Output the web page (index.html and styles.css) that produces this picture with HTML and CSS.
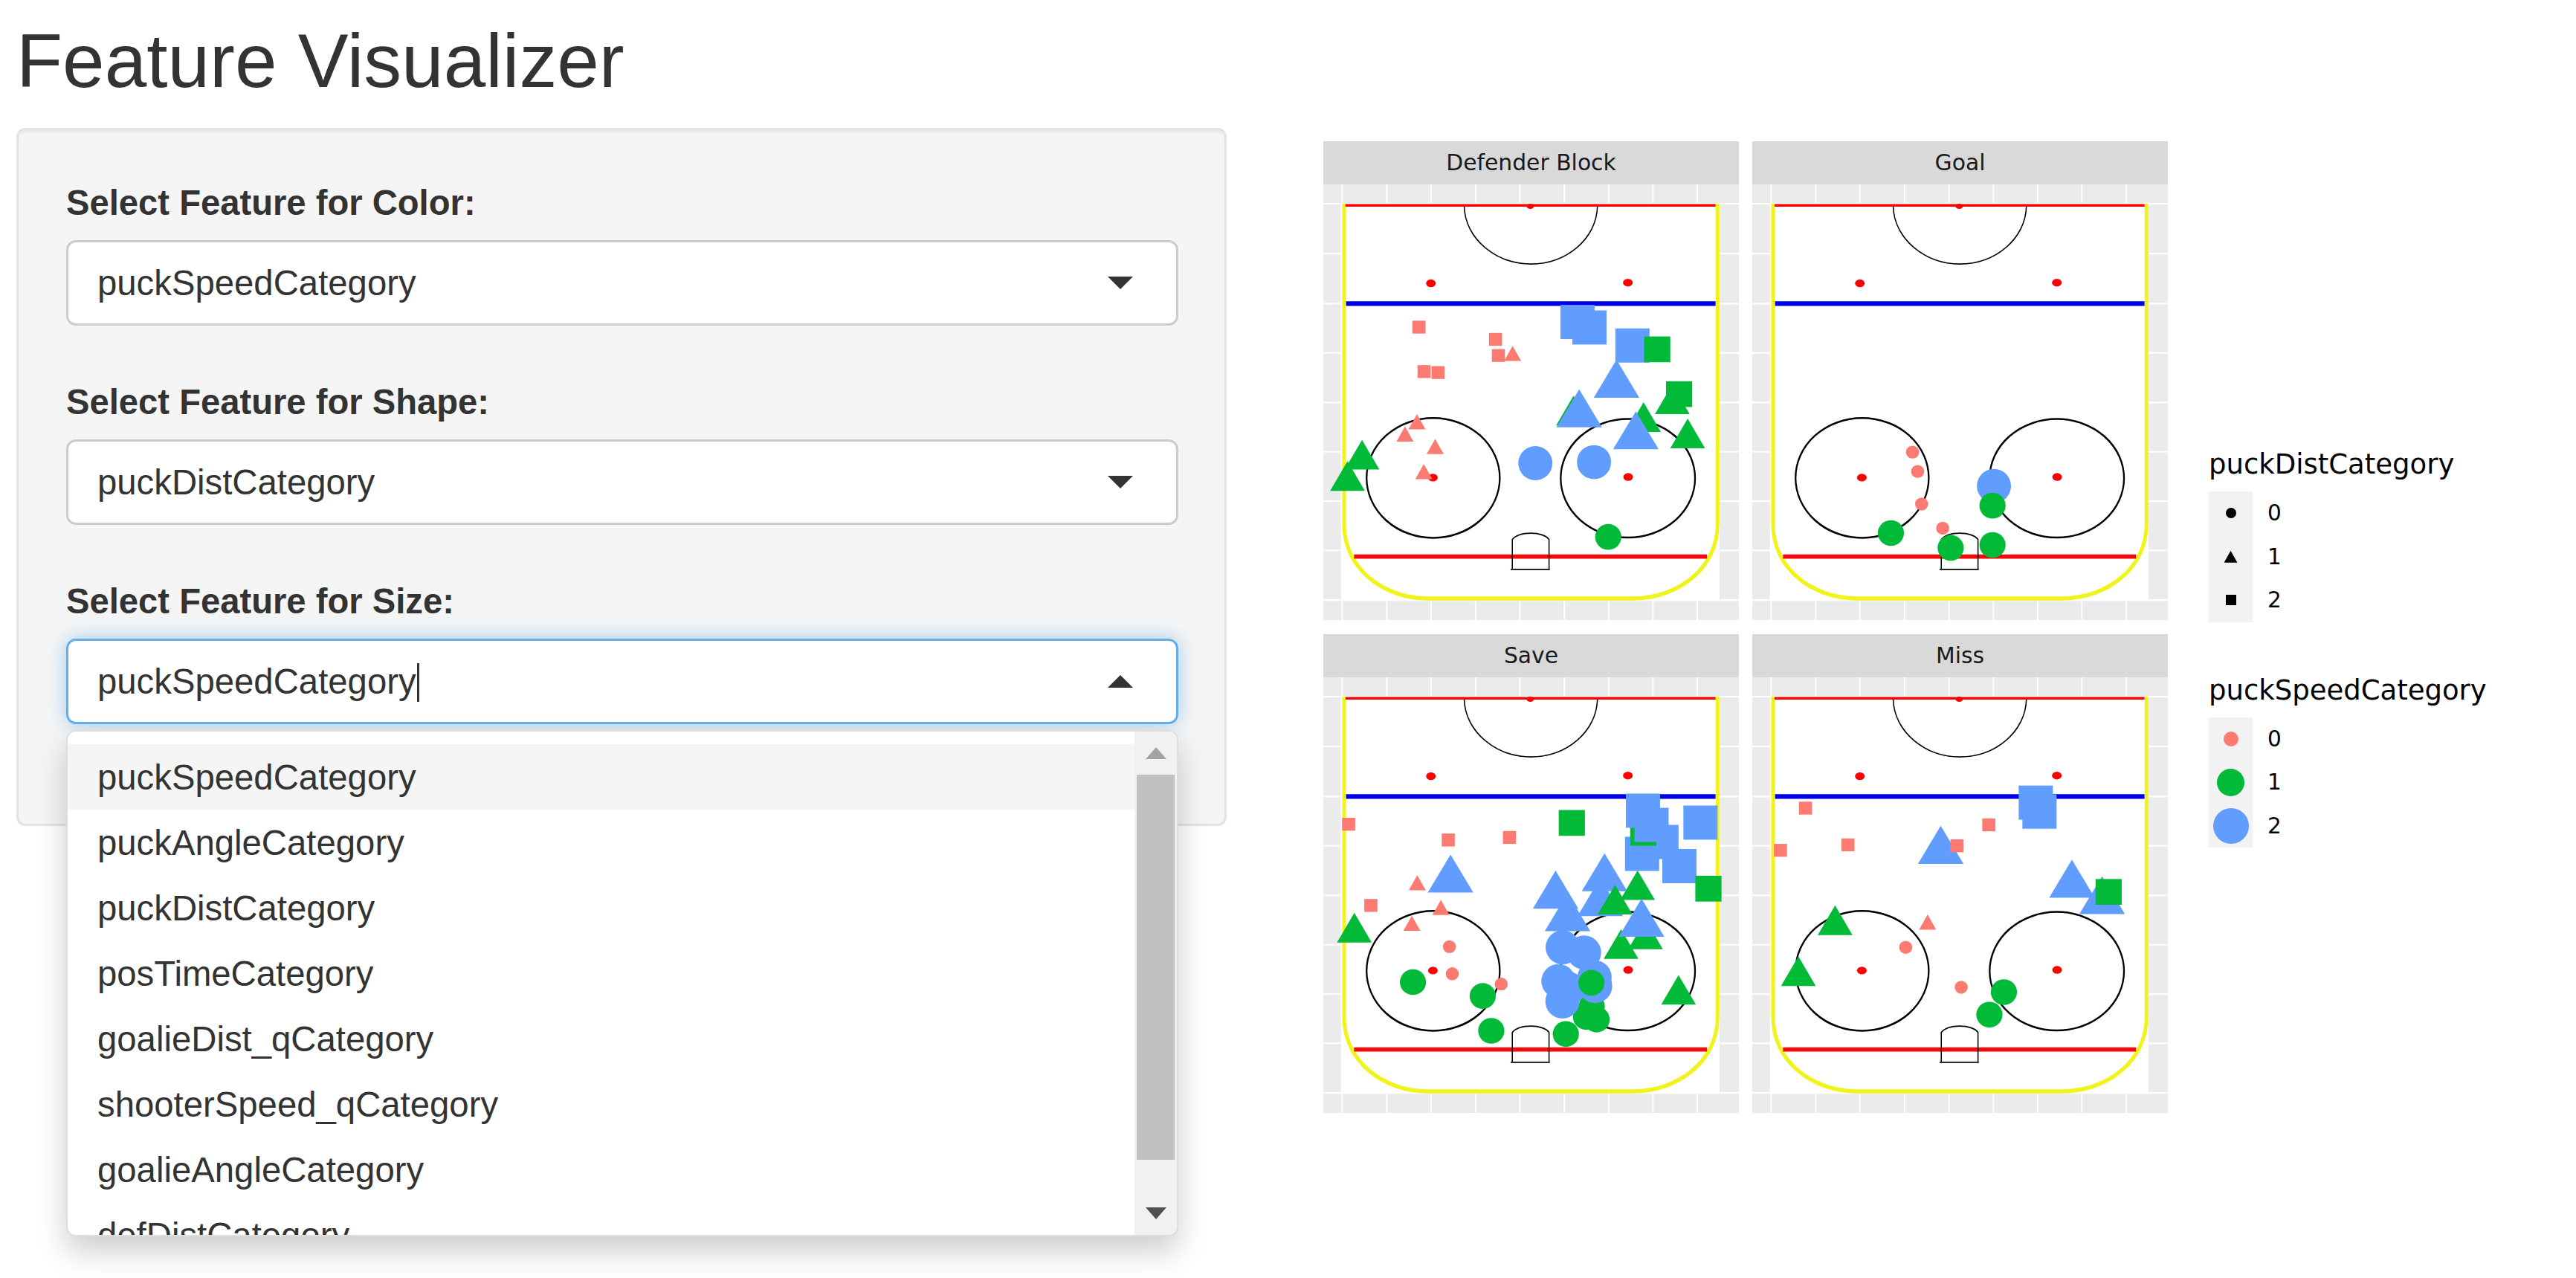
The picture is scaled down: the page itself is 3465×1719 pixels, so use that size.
FILE: index.html
```html
<!DOCTYPE html>
<html lang="en">
<head>
    <meta charset="UTF-8">
    <meta name="viewport" content="width=device-width, initial-scale=1.0">
    <title>Feature Visualizer</title>
    <link rel="stylesheet" href="styles.css">
</head>
<body>
    <h1 class="page-title">Feature Visualizer</h1>

    <div class="layout">
        <div class="sidebar">
            <div class="field">
                <label class="field-label">Select Feature for Color:</label>
                <div class="select">
                    <div class="select-input">
                        <span>puckSpeedCategory</span>
                        <span class="arrow-down"></span>
                    </div>
                </div>
            </div>
            <div class="field">
                <label class="field-label">Select Feature for Shape:</label>
                <div class="select">
                    <div class="select-input">
                        <span>puckDistCategory</span>
                        <span class="arrow-down"></span>
                    </div>
                </div>
            </div>
            <div class="field">
                <label class="field-label">Select Feature for Size:</label>
                <div class="select">
                    <div class="select-input focused">
                        <span>puckSpeedCategory<span class="caret"></span></span>
                        <span class="arrow-up"></span>
                    </div>
                    <div class="dropdown">
                        <div class="options">
                            <div class="option active">puckSpeedCategory</div>
                            <div class="option">puckAngleCategory</div>
                            <div class="option">puckDistCategory</div>
                            <div class="option">posTimeCategory</div>
                            <div class="option">goalieDist_qCategory</div>
                            <div class="option">shooterSpeed_qCategory</div>
                            <div class="option">goalieAngleCategory</div>
                            <div class="option">defDistCategory</div>
                        </div>
                        <div class="scrollbar">
                            <div class="scroll-btn"><span class="scroll-up"></span></div>
                            <div class="scroll-thumb"></div>
                            <div class="scroll-rest"></div>
                            <div class="scroll-btn"><span class="scroll-down"></span></div>
                        </div>
                    </div>
                </div>
            </div>
        </div>

        <div class="plot">
            <div class="facets">
                <!-- panel 1 also holds the shared defs: grid, rink and markers -->
                <div class="facet">
                    <div class="strip">Defender Block</div>
                    <svg class="panel" viewBox="52 180 1460 1352" preserveAspectRatio="none">
                        <defs>
                            <g id="grid" class="gridline">
                                <path d="M118 180V1532M275 180V1532M430 180V1532M587 180V1532M743 180V1532M899 180V1532M1055 180V1532M1210 180V1532M1366 180V1532"/>
                                <path d="M40 240H1520M40 395H1520M40 550H1520M40 703H1520M40 857H1520M40 1010H1520M40 1163H1520M40 1316H1520M40 1470H1520"/>
                            </g>
                            <g id="rink">
                                <rect class="ice" x="114" y="240" width="1330" height="1230"/>
                                <path class="boards" d="M125 240V1235C125 1370 260 1465 420 1465H1140C1300 1465 1437 1370 1437 1235V240"/>
                                <path class="line-red thin" d="M130 245H1430"/>
                                <path class="line-blue" d="M132 550H1430"/>
                                <path class="line-red" d="M160 1335H1400"/>
                                <path class="thin-black" d="M547 248C550 350 660 427 781 427C905 427 1012 350 1015 248"/>
                                <ellipse class="circle-black" cx="438" cy="1091" rx="234" ry="186"/>
                                <ellipse class="circle-black" cx="1122" cy="1092" rx="236" ry="184"/>
                                <path class="thin-black" d="M716 1374V1282C740 1256 825 1256 845 1282V1374M710 1375H848"/>
                                <ellipse class="dot" cx="779" cy="248" rx="13" ry="8"/>
                                <ellipse class="dot" cx="430" cy="487" rx="17" ry="12"/>
                                <ellipse class="dot" cx="1122" cy="485" rx="17" ry="12"/>
                                <ellipse class="dot" cx="437" cy="1090" rx="17" ry="12"/>
                                <ellipse class="dot" cx="1123" cy="1088" rx="17" ry="12"/>
                            </g>
                            <ellipse id="cs" class="red" rx="23" ry="20"/>
                            <ellipse id="cm" class="green" rx="46" ry="40"/>
                            <ellipse id="cl" class="blue" rx="60" ry="53"/>
                            <polygon id="ts" class="red" points="0,-24 30,23 -30,23"/>
                            <polygon id="tm" class="green" points="0,-46 61,46 -61,46"/>
                            <polygon id="tl" class="blue" points="0,-59 80,59 -80,59"/>
                            <rect id="ss" class="red" x="-23" y="-20" width="46" height="40"/>
                            <rect id="sm" class="green" x="-46" y="-40" width="92" height="80"/>
                            <rect id="sl" class="blue" x="-60" y="-53" width="120" height="106"/>
                        </defs>
                        <use href="#grid"/>
                        <use href="#rink"/>
                        <use href="#ss" x="388" y="623"/>
                        <use href="#ss" x="657" y="661"/>
                        <use href="#ss" x="667" y="711"/>
                        <use href="#ss" x="406" y="761"/>
                        <use href="#ss" x="455" y="764"/>
                        <use href="#ts" x="717" y="705"/>
                        <use href="#ts" x="381" y="917"/>
                        <use href="#ts" x="339" y="955"/>
                        <use href="#ts" x="445" y="994"/>
                        <use href="#ts" x="405" y="1072"/>
                        <use href="#sl" x="945" y="607"/>
                        <use href="#sl" x="987" y="624"/>
                        <use href="#sl" x="1138" y="680"/>
                        <use href="#sm" x="1225" y="692"/>
                        <use href="#tm" x="1278" y="847"/>
                        <use href="#sm" x="1302" y="831"/>
                        <use href="#tm" x="188" y="1019"/>
                        <use href="#tm" x="137" y="1085"/>
                        <use href="#tm" x="1177" y="902"/>
                        <use href="#tm" x="1332" y="953"/>
                        <use href="#tm" x="931" y="882"/>
                        <use href="#tl" x="1082" y="783"/>
                        <use href="#tl" x="951" y="875"/>
                        <use href="#tl" x="1150" y="943"/>
                        <use href="#cl" x="797" y="1045"/>
                        <use href="#cl" x="1003" y="1042"/>
                        <use href="#cm" x="1053" y="1274"/>
                    </svg>
                </div>

                <div class="facet">
                    <div class="strip">Goal</div>
                    <svg class="panel" viewBox="43 180 1460 1352" preserveAspectRatio="none">
                        <use href="#grid" transform="translate(-9 0)"/>
                        <use href="#rink" transform="translate(-9 0)"/>
                        <use href="#cs" x="606" y="1011"/>
                        <use href="#cs" x="624" y="1071"/>
                        <use href="#cs" x="638" y="1172"/>
                        <use href="#cs" x="712" y="1247"/>
                        <use href="#cl" x="892" y="1116"/>
                        <use href="#cm" x="887" y="1177"/>
                        <use href="#cm" x="530" y="1262"/>
                        <use href="#cm" x="740" y="1308"/>
                        <use href="#cm" x="887" y="1299"/>
                    </svg>
                </div>

                <div class="facet">
                    <div class="strip">Save</div>
                    <svg class="panel" viewBox="52 164 1460 1352" preserveAspectRatio="none">
                        <use href="#grid" transform="translate(0 -16)"/>
                        <use href="#rink" transform="translate(0 -16)"/>
                        <use href="#ss" x="141" y="620"/>
                        <use href="#ss" x="491" y="669"/>
                        <use href="#ss" x="706" y="661"/>
                        <use href="#ss" x="219" y="872"/>
                        <use href="#ts" x="382" y="802"/>
                        <use href="#ts" x="465" y="879"/>
                        <use href="#ts" x="363" y="928"/>
                        <use href="#cs" x="495" y="1000"/>
                        <use href="#cs" x="505" y="1084"/>
                        <use href="#cs" x="677" y="1116"/>
                        <use href="#sm" x="925" y="616"/>
                        <use href="#sl" x="1172" y="712"/>
                        <use href="#sl" x="1240" y="675"/>
                        <use href="#sl" x="1303" y="750"/>
                        <use href="#sl" x="1377" y="615"/>
                        <use href="#sm" x="1176" y="647"/>
                        <use href="#sl" x="1205" y="622"/>
                        <use href="#sl" x="1175" y="578"/>
                        <use href="#sm" x="1405" y="820"/>
                        <use href="#tl" x="499" y="773"/>
                        <use href="#tl" x="1040" y="769"/>
                        <use href="#tl" x="1025" y="846"/>
                        <use href="#tl" x="868" y="823"/>
                        <use href="#tl" x="910" y="893"/>
                        <use href="#tm" x="161" y="941"/>
                        <use href="#tm" x="1077" y="854"/>
                        <use href="#tm" x="1156" y="809"/>
                        <use href="#tm" x="1184" y="962"/>
                        <use href="#tm" x="1098" y="992"/>
                        <use href="#tl" x="1170" y="910"/>
                        <use href="#tm" x="1300" y="1134"/>
                        <use href="#cm" x="367" y="1110"/>
                        <use href="#cm" x="612" y="1153"/>
                        <use href="#cm" x="642" y="1261"/>
                        <use href="#cm" x="904" y="1271"/>
                        <use href="#cm" x="975" y="1218"/>
                        <use href="#cm" x="1012" y="1226"/>
                        <use href="#cm" x="995" y="1185"/>
                        <use href="#cl" x="893" y="1002"/>
                        <use href="#cl" x="968" y="1018"/>
                        <use href="#cl" x="1005" y="1095"/>
                        <use href="#cl" x="1007" y="1122"/>
                        <use href="#cl" x="878" y="1107"/>
                        <use href="#cl" x="910" y="1130"/>
                        <use href="#cl" x="892" y="1170"/>
                        <use href="#cm" x="994" y="1112"/>
                    </svg>
                </div>

                <div class="facet">
                    <div class="strip">Miss</div>
                    <svg class="panel" viewBox="43 164 1460 1352" preserveAspectRatio="none">
                        <use href="#grid" transform="translate(-9 -16)"/>
                        <use href="#rink" transform="translate(-9 -16)"/>
                        <use href="#tl" x="705" y="684"/>
                        <use href="#ss" x="230" y="570"/>
                        <use href="#ss" x="379" y="684"/>
                        <use href="#ss" x="142" y="701"/>
                        <use href="#ss" x="874" y="622"/>
                        <use href="#ss" x="762" y="687"/>
                        <use href="#ts" x="659" y="924"/>
                        <use href="#cs" x="582" y="1002"/>
                        <use href="#cs" x="777" y="1126"/>
                        <use href="#tm" x="334" y="918"/>
                        <use href="#tm" x="205" y="1076"/>
                        <use href="#sl" x="1039" y="553"/>
                        <use href="#sl" x="1052" y="581"/>
                        <use href="#tl" x="1166" y="789"/>
                        <use href="#tl" x="1272" y="840"/>
                        <use href="#sm" x="1295" y="830"/>
                        <use href="#cm" x="927" y="1141"/>
                        <use href="#cm" x="876" y="1211"/>
                    </svg>
                </div>
            </div>

            <div class="legends">
                <div class="legend">
                    <div class="legend-title">puckDistCategory</div>
                    <div class="legend-row"><span class="key"><i class="mark-circle"></i></span>0</div>
                    <div class="legend-row"><span class="key"><i class="mark-triangle"></i></span>1</div>
                    <div class="legend-row"><span class="key"><i class="mark-square"></i></span>2</div>
                </div>
                <div class="legend">
                    <div class="legend-title">puckSpeedCategory</div>
                    <div class="legend-row"><span class="key"><i class="size-0"></i></span>0</div>
                    <div class="legend-row"><span class="key"><i class="size-1"></i></span>1</div>
                    <div class="legend-row"><span class="key"><i class="size-2"></i></span>2</div>
                </div>
            </div>
        </div>
    </div>
</body>
</html>
```

FILE: styles.css
```css
html {
    min-height: 100%;
}

body {
    box-sizing: border-box;
    min-height: 1719px;
    margin: 0;
    padding: 0 22px;
    background-color: #fff;
    color: #333;
    font-family: "Liberation Sans", Arial, sans-serif;
    font-size: 47.3px;
}

.page-title {
    margin: 0 0 34px;
    padding-top: 27px;
    font-size: 101.7px;
    font-weight: 400;
    line-height: 111px;
}

.layout {
    display: flex;
    align-items: flex-start;
    gap: 130px;
}

/* sidebar */
.sidebar {
    box-sizing: border-box;
    flex: none;
    width: 1628px;
    padding: 64px 62px 0 64px;
    background-color: #f5f5f5;
    border: 3px solid #e3e3e3;
    border-radius: 12px;
    box-shadow: inset 0 3px 3px rgba(0, 0, 0, 0.05);
}

.field {
    margin-bottom: 69px;
}

.field:last-child {
    margin-bottom: 134px;
}

.field-label {
    display: block;
    margin-bottom: 17px;
    font-size: 47.2px;
    font-weight: 700;
    line-height: 67px;
}

.select {
    position: relative;
}

.select-input {
    box-sizing: border-box;
    display: flex;
    align-items: center;
    justify-content: space-between;
    height: 115px;
    padding: 0 58px 0 39px;
    background-color: #fff;
    border: 3px solid #ccc;
    border-radius: 13px;
}

.select-input.focused {
    border-color: #66afe9;
    box-shadow: 0 0 26px rgba(102, 175, 233, 0.6);
}

.arrow-down {
    border-top: 17px solid #333;
    border-left: 17px solid transparent;
    border-right: 17px solid transparent;
}

.arrow-up {
    border-bottom: 17px solid #333;
    border-left: 17px solid transparent;
    border-right: 17px solid transparent;
}

.caret {
    display: inline-block;
    width: 3px;
    height: 52px;
    margin-left: 1px;
    vertical-align: -11px;
    background-color: #333;
}

/* open dropdown, lies over the sidebar */
.dropdown {
    box-sizing: border-box;
    position: absolute;
    top: 123px;
    left: 0;
    z-index: 10;
    display: flex;
    width: 100%;
    height: 681px;
    overflow: hidden;
    background-color: #fff;
    border: 2px solid #ddd;
    border-radius: 13px;
    box-shadow: 0 20px 40px rgba(0, 0, 0, 0.2);
}

.options {
    flex: 1;
    padding-top: 17px;
}

.option {
    height: 88px;
    padding-left: 40px;
    line-height: 90px;
}

.option.active {
    background-color: #f5f5f5;
}

.scrollbar {
    display: flex;
    flex: none;
    flex-direction: column;
    width: 57px;
    background-color: #f1f1f1;
}

.scroll-btn {
    display: flex;
    flex: none;
    align-items: center;
    justify-content: center;
    height: 58px;
}

.scroll-thumb {
    flex: none;
    height: 518px;
    margin: 0 3px;
    background-color: #c1c1c1;
}

.scroll-rest {
    flex: 1;
}

.scroll-up {
    border-bottom: 16px solid #a3a3a3;
    border-left: 14px solid transparent;
    border-right: 14px solid transparent;
}

.scroll-down {
    border-top: 16px solid #505050;
    border-left: 14px solid transparent;
    border-right: 14px solid transparent;
}

/* plot */
.plot {
    display: flex;
    gap: 55px;
    margin-top: 18px;
    font-family: "DejaVu Sans", sans-serif;
}

.facets {
    display: grid;
    grid-template-columns: 559px 559px;
    gap: 19px 18px;
}

.strip {
    height: 58px;
    background-color: #d9d9d9;
    color: #1a1a1a;
    font-size: 29.8px;
    line-height: 58px;
    text-align: center;
}

.panel {
    display: block;
    width: 559px;
    height: 586px;
    background-color: #ebebeb;
}

.gridline {
    fill: none;
    stroke: #fff;
    stroke-width: 5;
}

.ice {
    fill: #fff;
}

.boards {
    fill: none;
    stroke: #f1f41c;
    stroke-width: 13;
}

.line-red {
    fill: none;
    stroke: #f40a0a;
    stroke-width: 13;
}

.line-red.thin {
    stroke: #ff0000;
    stroke-width: 8;
}

.line-blue {
    fill: none;
    stroke: #0000e6;
    stroke-width: 14;
}

.circle-black {
    fill: none;
    stroke: #000;
    stroke-width: 6;
}

.thin-black {
    fill: none;
    stroke: #000;
    stroke-width: 4;
}

.dot {
    fill: #f00;
}

.red {
    fill: #fb7b73;
}

.green {
    fill: #00ba38;
}

.blue {
    fill: #619cff;
}

/* legends */
.legends {
    align-self: center;
    margin-top: 56px;
    color: #000;
}

.legend + .legend {
    margin-top: 70px;
}

.legend-title {
    margin-bottom: 14px;
    font-size: 37px;
    line-height: 44px;
}

.legend-row {
    display: flex;
    align-items: center;
    gap: 20px;
    height: 58.5px;
    font-size: 29.5px;
}

.key {
    display: flex;
    align-items: center;
    justify-content: center;
    width: 59px;
    height: 100%;
    background-color: #f2f2f2;
}

.mark-circle {
    width: 14px;
    height: 14px;
    background-color: #000;
    border-radius: 50%;
}

.mark-triangle {
    width: 18px;
    height: 16px;
    background-color: #000;
    clip-path: polygon(50% 0, 100% 100%, 0 100%);
}

.mark-square {
    width: 14px;
    height: 14px;
    background-color: #000;
}

.size-0,
.size-1,
.size-2 {
    border-radius: 50%;
}

.size-0 {
    width: 20px;
    height: 20px;
    background-color: #fb7b73;
}

.size-1 {
    width: 37px;
    height: 37px;
    background-color: #00ba38;
}

.size-2 {
    width: 48px;
    height: 48px;
    background-color: #619cff;
}
```
